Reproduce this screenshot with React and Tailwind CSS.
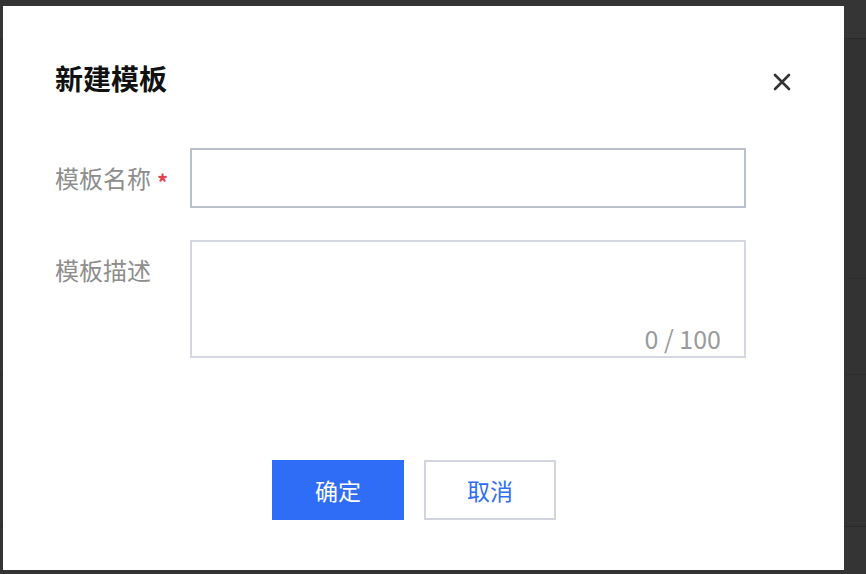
export default function App() {
  return (
    <div
      className="relative w-[866px] h-[574px] bg-[#333333] overflow-hidden"
      style={{ fontFamily: '"Noto Sans CJK SC", "Noto Sans", sans-serif' }}
    >
      {/* page behind the overlay */}
      <div className="absolute inset-0 flex flex-col">
        <div className="h-[39px] bg-[#353535] border-b border-[#2b2b2b]" />
        <div className="h-[240px] bg-[#323232] border-b border-[#2d2d2d]" />
        <div className="h-[96px] bg-[#333333] border-b border-[#2d2d2d]" />
        <div className="h-[152px] bg-[#333333] border-b border-[#2b2b2b]" />
        <div className="flex-1 bg-[#343434]" />
      </div>

      <div className="relative pt-[6px] pl-[3px]">
        <div className="w-[841px] h-[564px] bg-white flex flex-col">
          {/* header */}
          <div className="flex items-start justify-between pt-[58px] pl-[52px] pr-[53px]">
            <div className="text-[28px] leading-[28px] font-bold text-[#111111]">新建模板</div>
            <svg
              className="mt-[9px]"
              width="18"
              height="18"
              viewBox="0 0 18 18"
              fill="none"
              stroke="#333333"
              strokeWidth="2.6"
              strokeLinecap="round"
            >
              <path d="M2 2 L16 16 M16 2 L2 16" />
            </svg>
          </div>

          {/* form */}
          <div className="flex flex-col pl-[52px] mt-[56px]">
            <div className="flex items-center">
              <div className="w-[135px] flex items-center text-[24px] leading-[24px] text-[#8d8d8d]">
                <span>模板名称</span>
                <span className="ml-[6px] mt-[6px] text-[22px] leading-[22px] font-bold text-[#e0454f]">*</span>
              </div>
              <div className="w-[556px] h-[60px] border-2 border-[#b9c0cb] bg-white" />
            </div>

            <div className="flex items-start mt-[32px]">
              <div className="w-[135px] mt-[18px] text-[24px] leading-[24px] text-[#8d8d8d]">模板描述</div>
              <div className="w-[556px] h-[118px] border-2 border-[#d4d7df] bg-white flex flex-col justify-end items-end pr-[23px] pb-[3px]">
                <span className="text-[25px] leading-[30px] text-[#9a9a9a]">0 / 100</span>
              </div>
            </div>
          </div>

          {/* footer */}
          <div className="flex pl-[269px] mt-[102px] gap-[20px]">
            <button className="w-[132px] h-[60px] bg-[#2f6df6] text-white text-[23px] leading-[24px] flex items-center justify-center">
              确定
            </button>
            <button className="w-[132px] h-[60px] bg-white border-2 border-[#d2d5dd] text-[#2f6df6] text-[23px] leading-[24px] flex items-center justify-center">
              取消
            </button>
          </div>
        </div>
      </div>
    </div>
  );
}
